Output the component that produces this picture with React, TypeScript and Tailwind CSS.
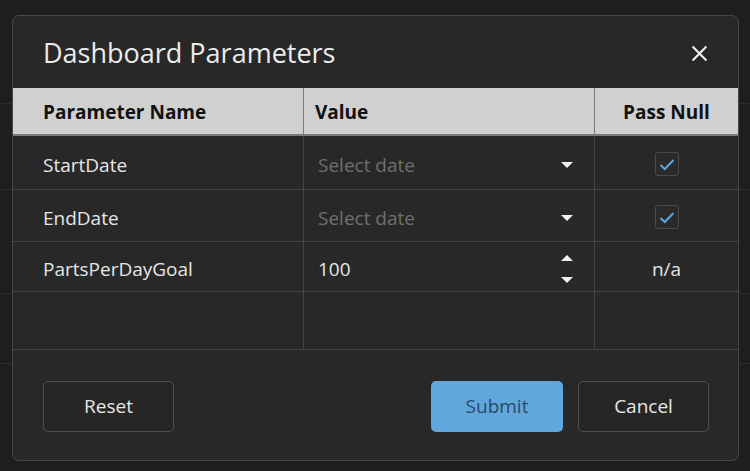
import React from "react";

// Dashboard parameters dialog — dark theme with a light header table.

const font = { fontFamily: '"Open Sans", "Noto Sans", sans-serif' };

function Caret({ up = false }: { up?: boolean }) {
  return (
    <svg width="12" height="7" viewBox="0 0 12 7" aria-hidden>
      {up ? (
        <path d="M0 7 L6 1 L12 7 Z" fill="#f2f2f2" />
      ) : (
        <path d="M0 0 L12 0 L6 6 Z" fill="#f2f2f2" />
      )}
    </svg>
  );
}

function Check() {
  return (
    <span className="flex h-[24px] w-[24px] items-center justify-center rounded-[3px] border border-[#4a4a4a] bg-[#2a2a2a]">
      <svg width="16" height="13" viewBox="0 0 16 13" fill="none" aria-hidden>
        <path d="M1.5 7 L5.8 11 L14.5 2" stroke="#5aa5e0" strokeWidth="2" />
      </svg>
    </span>
  );
}

type Row = { name: string; kind: "date" | "number" | "empty"; value?: string };

const rows: Row[] = [
  { name: "StartDate", kind: "date" },
  { name: "EndDate", kind: "date" },
  { name: "PartsPerDayGoal", kind: "number", value: "100" },
  { name: "", kind: "empty" },
];

const heights = ["h-[54px]", "h-[52px]", "h-[50px]", "h-[58px]"];

export default function App() {
  return (
    <div className="relative h-[471px] w-[750px] overflow-hidden bg-[#1e1e1e]" style={font}>
      {/* faint page lines behind the dialog */}
      <div className="absolute left-0 right-0 top-[103px] h-px bg-[#2c2c2c]" />
      <div className="absolute left-0 right-0 top-[189px] h-px bg-[#2c2c2c]" />
      <div className="absolute left-0 right-0 top-[293px] h-px bg-[#2c2c2c]" />
      <div className="absolute left-0 right-0 top-[363px] h-px bg-[#2c2c2c]" />

      <div className="absolute left-[12px] top-[15px] flex h-[446px] w-[727px] flex-col overflow-hidden rounded-[7px] border border-[#474747] bg-[#282828]">
        {/* title */}
        <div className="flex h-[72px] items-center justify-between pl-[30px] pr-[30px] pt-[2px]">
          <h1 className="text-[27px] font-normal text-[#ececec]">Dashboard Parameters</h1>
          <svg width="17" height="17" viewBox="0 0 16 16" aria-hidden>
            <path d="M1.5 1.5 L14.5 14.5 M14.5 1.5 L1.5 14.5" stroke="#f2f2f2" strokeWidth="2" />
          </svg>
        </div>

        {/* table */}
        <div className="grid grid-cols-[291px_291px_1fr]">
          <div className="flex h-[48px] items-center border-r border-b-2 border-[#7a7a7a] bg-[#d0d0d0] pl-[30px] pt-[3px] text-[19px] font-bold text-[#111]">
            Parameter Name
          </div>
          <div className="flex h-[48px] items-center border-r border-b-2 border-[#7a7a7a] bg-[#d0d0d0] pl-[11px] pt-[3px] text-[19px] font-bold text-[#111]">
            Value
          </div>
          <div className="flex h-[48px] items-center justify-center border-b-2 border-[#7a7a7a] bg-[#d0d0d0] pt-[3px] text-[19px] font-bold text-[#111]">
            Pass Null
          </div>

          {rows.map((r, i) => (
            <React.Fragment key={i}>
              <div
                className={`flex ${heights[i]} items-center border-r border-b border-[#444] pl-[30px] pt-[5px] text-[19px] text-[#e6e6e6]`}
              >
                {r.name}
              </div>
              <div
                className={`flex ${heights[i]} items-center justify-between border-r border-b border-[#444] pl-[14px] pr-[21px] pt-[5px] text-[19px]`}
              >
                {r.kind === "date" && (
                  <>
                    <span className="text-[#6f6f6f]">Select date</span>
                    <Caret />
                  </>
                )}
                {r.kind === "number" && (
                  <>
                    <span className="text-[#e6e6e6]">{r.value}</span>
                    <span className="flex flex-col gap-[16px]">
                      <Caret up />
                      <Caret />
                    </span>
                  </>
                )}
              </div>
              <div
                className={`flex ${heights[i]} items-center justify-center border-b border-[#444] pt-[3px] text-[19px] text-[#e6e6e6]`}
              >
                {r.kind === "date" && <Check />}
                {r.kind === "number" && <span className="pt-[2px]">n/a</span>}
              </div>
            </React.Fragment>
          ))}
        </div>

        {/* footer */}
        <div className="flex flex-1 items-center justify-between pl-[30px] pr-[29px] pt-[2px]">
          <button className="h-[51px] w-[131px] rounded-[5px] border border-[#4e4e4e] bg-[#262626] text-[19px] text-[#e6e6e6]">
            Reset
          </button>
          <div className="flex gap-[15px]">
            <button className="h-[51px] w-[132px] rounded-[5px] bg-[#62a7dc] text-[19px] text-[#2a4a66]">
              Submit
            </button>
            <button className="h-[51px] w-[131px] rounded-[5px] border border-[#4e4e4e] bg-[#262626] text-[19px] text-[#e6e6e6]">
              Cancel
            </button>
          </div>
        </div>
      </div>
    </div>
  );
}
